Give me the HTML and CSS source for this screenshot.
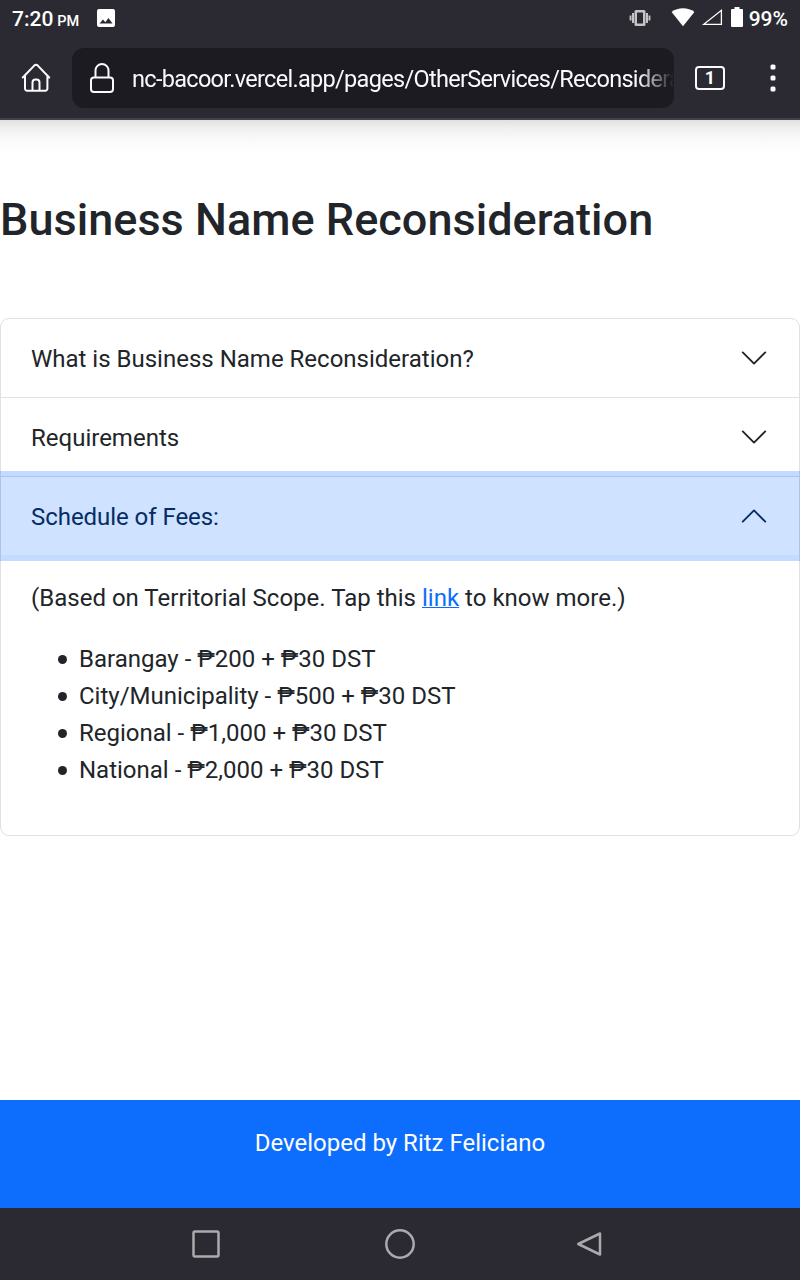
FILE: index.html
```html
<!DOCTYPE html>
<html lang="en">
<head>
<meta charset="utf-8">
<title>Business Name Reconsideration</title>
<link rel="stylesheet" href="styles.css">
</head>
<body>
<div class="screen">
  <header class="chrome">
    <div class="status">
      <span class="clock">7:20</span><span class="meridiem">PM</span>
      <svg class="photo" width="18" height="18" viewBox="0 0 18 18"><path fill="#fff" fill-rule="evenodd" d="M2 0h14a2 2 0 0 1 2 2v14a2 2 0 0 1-2 2H2a2 2 0 0 1-2-2V2a2 2 0 0 1 2-2zM2.500 14.500h13L11.500 9l-3.200 4.200L6 10.500z"/></svg>
      <svg class="vibrate" width="22" height="18" viewBox="0 0 22 18"><g fill="#c4c4c7"><path fill-rule="evenodd" d="M7 1h8a1.500 1.500 0 0 1 1.500 1.500v13A1.500 1.500 0 0 1 15 17H7a1.500 1.500 0 0 1-1.500-1.500v-13A1.500 1.500 0 0 1 7 1zM8 3.500v11h6v-11z"/><path d="M3 4h2v10H3zM.6 6.500h1.900v5H.6zM17 4h2v10h-2zM19.500 6.500h1.900v5h-1.900z"/></g></svg>
      <svg class="wifi" width="24" height="20" viewBox="0 0 24 20"><path fill="#fff" d="M.6 5C7 .1 17 .1 23.400 5L12 19.300z"/></svg>
      <svg class="signal" width="22" height="18" viewBox="0 0 22 18"><path fill="none" stroke="#fff" stroke-width="1.300" d="M2.800 16.300H20.400V2.300z"/></svg>
      <svg class="battery" width="12" height="20" viewBox="0 0 12 20"><path fill="#fff" d="M3.500 0h5v2H11q1 0 1 1v16q0 1-1 1H1q-1 0-1-1V3q0-1 1-1h2.500z"/></svg>
      <span class="percent">99%</span>
    </div>
    <div class="toolbar">
      <svg class="home" width="30" height="30" viewBox="0 0 30 30" fill="none" stroke="#fbfbfe" stroke-width="2" stroke-linecap="round" stroke-linejoin="round"><path d="M1.800 14.500 13.200 2.600q1.800-1.700 3.600 0l11.400 11.900M4 13V25.600a2.200 2.200 0 0 0 2.200 2.200h18a2.200 2.200 0 0 0 2.200-2.200V13M11.500 27.500v-8a3 3 0 0 1 3-3h1a3 3 0 0 1 3 3v8"/></svg>
      <div class="address">
        <svg class="lock" width="26" height="32" viewBox="0 0 26 32" fill="none" stroke="#fbfbfe" stroke-width="2"><rect x="2" y="15.500" width="22" height="14.500" rx="3"/><path d="M6.500 15V8.500a6.500 6.500 0 0 1 13 0V15"/></svg>
        <span class="url">nc-bacoor.vercel.app/pages/OtherServices/Reconsidera</span>
      </div>
      <div class="tabs">1</div>
      <svg class="more" width="6" height="28" viewBox="0 0 6 28" fill="#fbfbfe"><rect x=".5" y=".5" width="5" height="5" rx="1.500"/><rect x=".5" y="11.500" width="5" height="5" rx="1.500"/><rect x=".5" y="22.500" width="5" height="5" rx="1.500"/></svg>
    </div>
  </header>
  <main class="page">
    <h1 class="title">Business Name Reconsideration</h1>
    <div class="accordion">
      <div class="item">
        <button class="head"><span>What is Business Name Reconsideration?</span>
          <svg class="chevron" viewBox="0 0 16 16"><path d="m2 5 6 6 6-6"/></svg></button>
      </div>
      <div class="item">
        <button class="head"><span>Requirements</span>
          <svg class="chevron" viewBox="0 0 16 16"><path d="m2 5 6 6 6-6"/></svg></button>
      </div>
      <div class="item">
        <button class="head open"><span>Schedule of Fees:</span>
          <svg class="chevron" viewBox="0 0 16 16"><path d="m2 11 6-6 6 6"/></svg></button>
        <div class="body">
          <p class="note">(Based on Territorial Scope. Tap this <a class="link" href="#">link</a> to know more.)</p>
          <ul class="fees">
            <li>Barangay - ₱200 + ₱30 DST</li>
            <li>City/Municipality - ₱500 + ₱30 DST</li>
            <li>Regional - ₱1,000 + ₱30 DST</li>
            <li>National - ₱2,000 + ₱30 DST</li>
          </ul>
        </div>
      </div>
    </div>
  </main>
  <footer class="credit">Developed by Ritz Feliciano</footer>
  <nav class="nav">
    <svg width="30" height="30" viewBox="0 0 30 30"><rect x="2.500" y="2.500" width="25" height="25" rx="1.500"/></svg>
    <svg class="circle" width="32" height="32" viewBox="0 0 32 32"><circle cx="16" cy="16" r="13.700"/></svg>
    <svg width="28" height="28" viewBox="0 0 28 28"><path d="M3.300 14 25 3.500v21z"/></svg>
  </nav>
</div>
</body>
</html>
```
FILE: styles.css
```css
* { box-sizing: border-box; }
body { margin: 0; font-family: Roboto, "Noto Sans", sans-serif; font-size: 24px; color: #212529; background: #fff; }
svg { display: block; flex: none; }
.screen { display: flex; flex-direction: column; width: 800px; height: 1280px; overflow: hidden; }

.chrome { height: 120px; flex: none; background: #2b2a33; border-bottom: 2px solid #42414d; color: #fff; }
.status { display: flex; align-items: center; height: 36px; padding: 0 12px; }
.clock { font-size: 21px; font-weight: 500; line-height: 36px; padding-top: 2px; }
.meridiem { font-size: 14.500px; font-weight: 500; margin-left: 4px; padding-top: 6px; }
.photo { margin-left: 18px; }
.vibrate { margin-left: auto; margin-top: -1px; }
.wifi { margin-left: 20px; margin-top: -2px; }
.signal { margin-left: 6px; margin-top: -2px; }
.battery { margin-left: 8px; margin-top: -2px; }
.percent { font-size: 21px; font-weight: 500; margin-left: 6px; padding-top: 2px; }

.toolbar { display: flex; align-items: center; height: 60px; margin-top: 12px; padding: 0 24px 0 21px; }
.address { display: flex; align-items: center; width: 602px; height: 60px; margin-left: 21px; padding-left: 17px; border-radius: 12px; background: #1c1b22; overflow: hidden; }
.url { flex: 1; min-width: 0; margin-left: 17px; padding-top: 2px; overflow: hidden; white-space: nowrap; font-size: 23.500px; letter-spacing: -.69px; line-height: 36px; color: #fbfbfe; -webkit-mask-image: linear-gradient(to left, transparent, #000 36px); mask-image: linear-gradient(to left, transparent, #000 36px); }
.tabs { width: 30px; height: 24px; margin-left: 21px; border: 2px solid #fbfbfe; border-radius: 4px; font-size: 18px; font-weight: 700; line-height: 20px; text-align: center; }
.more { margin-left: auto; }

.page { flex: 1; background: linear-gradient(#e0e0e0, #f1f1f1 9px, #fafafa 20px, #fff 34px); background-repeat: no-repeat; }
.title { margin: 73px 0 0; font-size: 45px; letter-spacing: .03px; font-weight: 500; line-height: 54px; white-space: nowrap; }
.accordion { margin-top: 71px; border: 1px solid #dee2e6; border-radius: 9px; }
.item + .item { border-top: 1px solid #dee2e6; }
.head { display: flex; align-items: center; justify-content: space-between; width: 100%; height: 78px; padding: 0 30px; border: 0; background: none; color: inherit; font: inherit; text-align: left; }
.head span { padding-top: 2px; }
.open { position: relative; background: #cfe2ff; color: #052c65; box-shadow: 0 0 0 6px rgba(13, 110, 253, .25); }
.open span { letter-spacing: -.05px; }
.chevron { width: 30px; height: 30px; fill: none; stroke: currentColor; stroke-linecap: round; stroke-linejoin: round; }
.body { padding: 25px 30px 22px; line-height: 37px; }
.note { margin: 0 0 24px; letter-spacing: .01px; }
.link { color: #0d6efd; text-decoration: underline; text-decoration-thickness: 1px; }
.fees { margin: 0 0 24px; padding-left: 48px; list-style: none; }
.fees li::before { content: ""; display: inline-block; width: 9px; height: 9px; margin: 0 12px 0 -21px; border-radius: 50%; background: #212529; vertical-align: 3px; }

.credit { height: 108px; flex: none; padding-top: 25px; background: #0d6efd; color: #fff; line-height: 37px; text-align: center; }
.nav { display: flex; align-items: center; height: 72px; flex: none; padding: 0 197px 0 191px; justify-content: space-between; background: #2b2a33; fill: none; stroke: #aaaaad; stroke-width: 2.500; stroke-linejoin: round; }
.circle { margin-left: 4px; }
```
